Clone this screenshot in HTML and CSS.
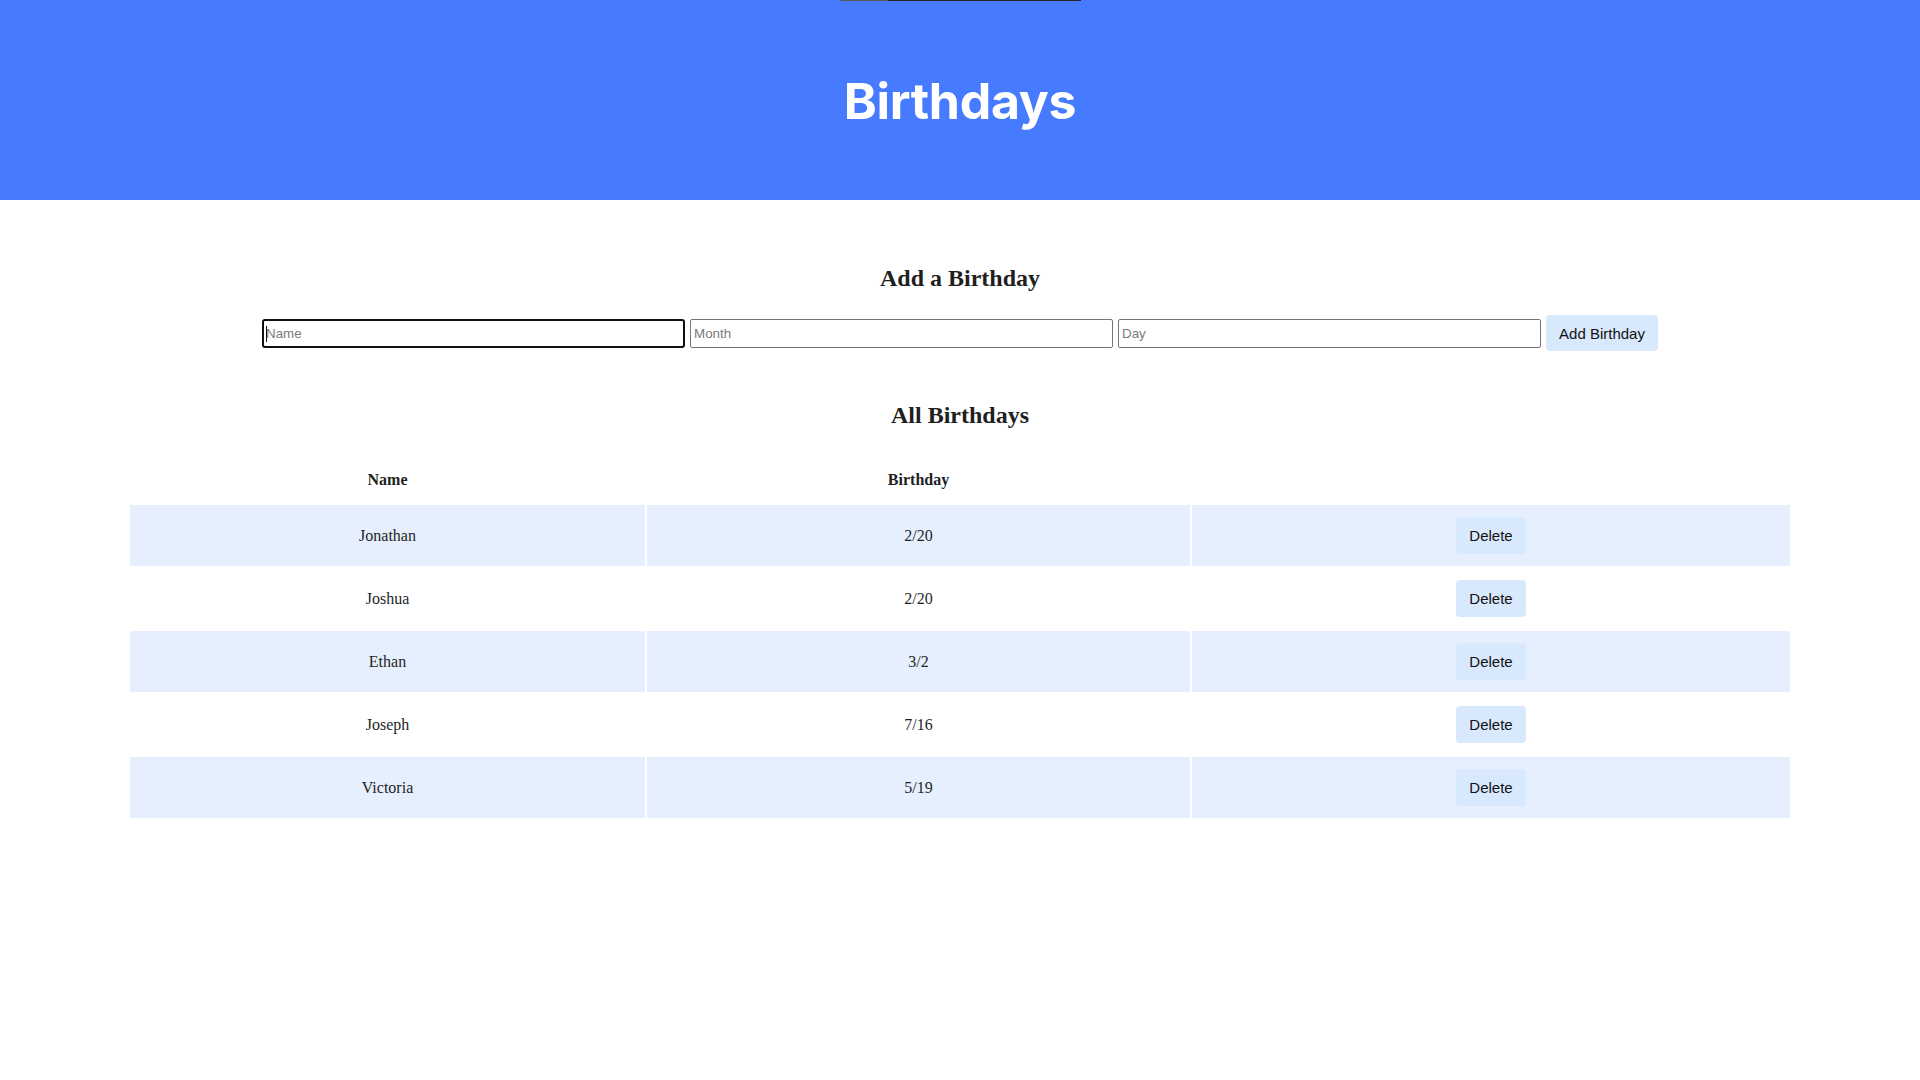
FILE: index.html
```html
<!DOCTYPE html>
<html lang="en">
<head>
<meta charset="utf-8">
<title>Birthdays</title>
<link rel="stylesheet" href="styles.css">
</head>
<body>
<header class="banner">
  <div class="top-line"><span class="top-line-a"></span><span class="top-line-b"></span></div>
  <h1 class="banner-title">Birthdays</h1>
</header>
<main class="content">
  <h2 class="section-title add-title">Add a Birthday</h2>
  <form class="add-form" onsubmit="return false;">
    <span class="field-wrap">
      <input class="field field-focused" type="text" placeholder="Name">
      <span class="caret"></span>
    </span>
    <input class="field" type="text" placeholder="Month">
    <input class="field" type="text" placeholder="Day">
    <button class="btn btn-add" type="button">Add Birthday</button>
  </form>

  <h2 class="section-title list-title">All Birthdays</h2>
  <table class="bday-table">
    <colgroup>
      <col class="col-name">
      <col class="col-date">
      <col class="col-action">
    </colgroup>
    <thead>
      <tr><th>Name</th><th>Birthday</th><th></th></tr>
    </thead>
    <tbody>
      <tr class="striped"><td>Jonathan</td><td>2/20</td><td><button class="btn btn-del" type="button">Delete</button></td></tr>
      <tr><td>Joshua</td><td>2/20</td><td><button class="btn btn-del" type="button">Delete</button></td></tr>
      <tr class="striped"><td>Ethan</td><td>3/2</td><td><button class="btn btn-del" type="button">Delete</button></td></tr>
      <tr><td>Joseph</td><td>7/16</td><td><button class="btn btn-del" type="button">Delete</button></td></tr>
      <tr class="striped"><td>Victoria</td><td>5/19</td><td><button class="btn btn-del" type="button">Delete</button></td></tr>
    </tbody>
  </table>
</main>
</body>
</html>
```
FILE: styles.css
```css
html, body {
  margin: 0;
  padding: 0;
  background: #ffffff;
}

body {
  font-family: "Liberation Serif", "Times New Roman", serif;
  color: #1f1f1f;
}

.banner {
  position: relative;
  height: 200px;
  background: #477bff;
  display: flex;
  align-items: center;
  justify-content: center;
}

.top-line {
  position: absolute;
  top: 0;
  left: 840px;
  height: 1px;
  display: flex;
}

.top-line-a {
  width: 48px;
  height: 1px;
  background: #5b5b5b;
}

.top-line-b {
  width: 193px;
  height: 1px;
  background: #262626;
}

.banner-title {
  margin: 0;
  font-family: "Inter", "Open Sans", sans-serif;
  font-weight: 700;
  font-size: 50px;
  letter-spacing: -0.3px;
  color: #ffffff;
  line-height: 1;
  padding-top: 2px;
}

.content {
  display: flex;
  flex-direction: column;
  align-items: center;
}

.section-title {
  font-size: 24px;
  font-weight: 700;
  margin: 0;
  line-height: 28px;
}

.add-title {
  margin-top: 64px;
}

.add-form {
  display: flex;
  align-items: center;
  gap: 5px;
  margin-top: 23px;
}

.field-wrap {
  position: relative;
  display: flex;
}

.field {
  box-sizing: border-box;
  width: 423px;
  height: 29px;
  border: 1px solid #767676;
  border-radius: 2px;
  padding: 1px 3px;
  font-family: "Liberation Sans", Arial, sans-serif;
  font-size: 13.33px;
  color: #111;
  background: #fff;
  outline: none;
}

.field::placeholder {
  color: #7a7a7a;
}

.field-focused {
  border: 2px solid #101010;
  border-radius: 3px;
  padding: 0 2px;
}

.caret {
  position: absolute;
  left: 4px;
  top: 7px;
  width: 1px;
  height: 16px;
  background: #111;
}

.btn {
  font-family: "Liberation Sans", Arial, sans-serif;
  font-size: 15px;
  color: #111;
  background: #d9e9fd;
  border: none;
  border-radius: 4px;
  cursor: pointer;
}

.btn-add {
  height: 36px;
  padding: 0 13px;
}

.list-title {
  margin-top: 50px;
}

.bday-table {
  margin-top: 24px;
  width: 1664px;
  table-layout: fixed;
  border-collapse: separate;
  border-spacing: 2px;
}

.col-name { width: 515px; }
.col-date { width: 543px; }
.col-action { width: 598px; }

.bday-table th {
  font-size: 16px;
  font-weight: 700;
  text-align: center;
  padding: 16px 0 14px;
}

.bday-table td {
  font-size: 16px;
  text-align: center;
  vertical-align: middle;
  padding: 12px 0;
  height: 37px;
}

.bday-table tr.striped td {
  background: #e6effe;
}

.btn-del {
  height: 37px;
  padding: 0 13px;
  vertical-align: middle;
}
```
